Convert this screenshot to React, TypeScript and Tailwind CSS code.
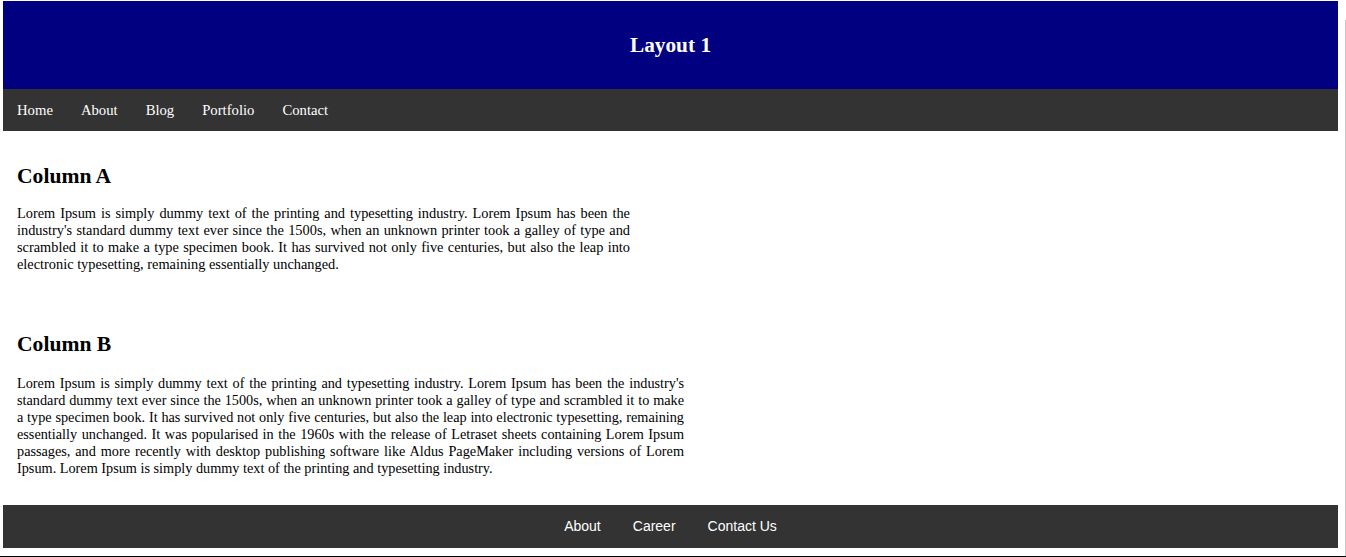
import React from 'react';

const navLinks = ['Home', 'About', 'Blog', 'Portfolio', 'Contact'];
const footerLinks = ['About', 'Career', 'Contact Us'];

const textA =
  "Lorem Ipsum is simply dummy text of the printing and typesetting industry. Lorem Ipsum has been the industry's standard dummy text ever since the 1500s, when an unknown printer took a galley of type and scrambled it to make a type specimen book. It has survived not only five centuries, but also the leap into electronic typesetting, remaining essentially unchanged.";

const textB =
  "Lorem Ipsum is simply dummy text of the printing and typesetting industry. Lorem Ipsum has been the industry's standard dummy text ever since the 1500s, when an unknown printer took a galley of type and scrambled it to make a type specimen book. It has survived not only five centuries, but also the leap into electronic typesetting, remaining essentially unchanged. It was popularised in the 1960s with the release of Letraset sheets containing Lorem Ipsum passages, and more recently with desktop publishing software like Aldus PageMaker including versions of Lorem Ipsum. Lorem Ipsum is simply dummy text of the printing and typesetting industry.";

export default function App() {
  return (
    <div className="relative w-[1346px] h-[557px] bg-white overflow-hidden border-b border-black font-['Liberation_Serif','Times_New_Roman',serif] text-black">
      {/* right edge line */}
      <div className="absolute right-0 top-[20px] bottom-0 w-[1px] bg-[#c8c8c8]" />

      <div className="ml-[3px] mt-[1px] w-[1335px]">
        <header className="h-[88px] bg-[#000080] flex items-center justify-center">
          <h1 className="text-[21.3px] leading-[24px] font-bold text-white">Layout 1</h1>
        </header>

        <nav className="h-[42px] bg-[#333333] flex items-center">
          {navLinks.map((l) => (
            <a key={l} className="px-[14px] text-[14.7px] leading-[17px] text-white">
              {l}
            </a>
          ))}
        </nav>

        <main className="px-[14px]">
          <section className="pt-[33px] w-[613px]">
            <h2 className="text-[21.6px] leading-[24px] font-bold">Column A</h2>
            <p className="mt-[17px] text-[14.35px] leading-[17px] text-justify">{textA}</p>
          </section>

          <section className="pt-[59px] w-[667px]">
            <h2 className="text-[21.6px] leading-[24px] font-bold">Column B</h2>
            <p className="mt-[19px] text-[14.25px] leading-[17px] text-justify">{textB}</p>
          </section>
        </main>

        <footer className="mt-[28px] h-[43px] bg-[#333333] flex items-center justify-center font-['Liberation_Sans',Arial,sans-serif]">
          {footerLinks.map((l) => (
            <a key={l} className="px-[16px] text-[14px] leading-[17px] text-white">
              {l}
            </a>
          ))}
        </footer>
      </div>
    </div>
  );
}
